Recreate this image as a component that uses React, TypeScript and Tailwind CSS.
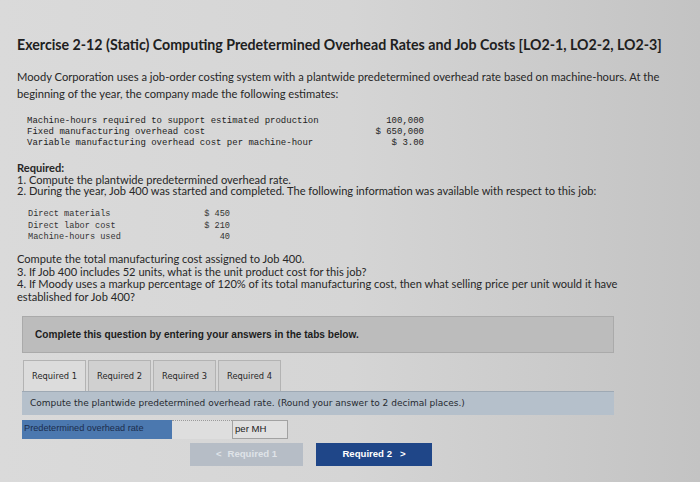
import React from 'react';

const body = { fontFamily: 'Lato, "Open Sans", sans-serif' };
const mono = { fontFamily: '"Liberation Mono", "Courier New", monospace' };
const verdana = { fontFamily: '"DejaVu Sans", Verdana, sans-serif' };
const arial = { fontFamily: '"Liberation Sans", Arial, sans-serif' };

const estimates = [
  ['Machine-hours required to support estimated production', '100,000'],
  ['Fixed manufacturing overhead cost', '$ 650,000'],
  ['Variable manufacturing overhead cost per machine-hour', '$ 3.00'],
];

const jobRows = [
  ['Direct materials', '$ 450'],
  ['Direct labor cost', '$ 210'],
  ['Machine-hours used', '40'],
];

const tabs = ['Required 1', 'Required 2', 'Required 3', 'Required 4'];

export default function App() {
  return (
    <div
      className="h-[482px] w-[700px] overflow-hidden bg-gradient-to-r from-[#dadada] via-[#d5d5d5] to-[#c3c3c3] text-[#272727]"
      style={body}
    >
      <div className="pl-[17px] pt-[37px]">
        <h1 className="whitespace-nowrap text-[14.2px] font-bold leading-[16px] text-[#202020]">
          Exercise 2-12 (Static) Computing Predetermined Overhead Rates and Job Costs [LO2-1, LO2-2, LO2-3]
        </h1>

        <p className="mt-[15px] w-[650px] text-[11.2px] leading-[17px]">
          Moody Corporation uses a job-order costing system with a plantwide predetermined overhead rate based on
          machine-hours. At the beginning of the year, the company made the following estimates:
        </p>

        <div className="ml-[10px] mt-[14px] w-[397px] text-[9px] leading-[11px] text-[#222]" style={mono}>
          {estimates.map(([label, value]) => (
            <div key={label} className="flex justify-between">
              <span>{label}</span>
              <span className="whitespace-pre">{value}</span>
            </div>
          ))}
        </div>

        <div className="mt-[13px] text-[11.1px] leading-[11.5px]">
          <div className="font-bold">Required:</div>
          <div>1. Compute the plantwide predetermined overhead rate.</div>
          <div>
            2. During the year, Job 400 was started and completed. The following information was available with
            respect to this job:
          </div>
        </div>

        <div className="ml-[11px] mt-[12.5px] w-[202px] text-[8.6px] leading-[11.5px] text-[#333]" style={mono}>
          {jobRows.map(([label, value]) => (
            <div key={label} className="flex justify-between">
              <span>{label}</span>
              <span className="whitespace-pre">{value}</span>
            </div>
          ))}
        </div>

        <div className="mt-[9.5px] w-[610px] text-[11.1px] leading-[12.7px]">
          <div>Compute the total manufacturing cost assigned to Job 400.</div>
          <div>3. If Job 400 includes 52 units, what is the unit product cost for this job?</div>
          <div>
            4. If Moody uses a markup percentage of 120% of its total manufacturing cost, then what selling price per
            unit would it have established for Job 400?
          </div>
        </div>
      </div>

      <div className="ml-[22px] w-[592px]">
        <div
          className="mt-[12px] flex h-[37px] items-center border border-[#aaaaaa] bg-[#bcbcbc] pl-[12px] text-[10.1px] font-bold text-[#1c1c1c]"
          style={arial}
        >
          Complete this question by entering your answers in the tabs below.
        </div>

        <div className="mt-[7px] flex h-[31px] gap-[2px] pl-[1px]" style={verdana}>
          {tabs.map((t, i) => (
            <div
              key={t}
              className={`flex w-[63px] items-center justify-center border border-b-0 border-[#b3b3b3] text-[8.3px] ${
                i === 0 ? 'bg-[#dcdcdc]' : 'bg-[#d0d0d0]'
              }`}
            >
              {t}
            </div>
          ))}
        </div>

        <div
          className="flex h-[24px] items-center border-t border-[#9ea9b4] bg-[#b5c0cb] pl-[8px] text-[9px] text-[#262a30]"
          style={verdana}
        >
          Compute the plantwide predetermined overhead rate. (Round your answer to 2 decimal places.)
        </div>

        <div className="mt-[5px] flex h-[19px] text-[9.2px]" style={arial}>
          <div className="flex w-[150px] items-center bg-[#4b78af] pl-[2px] text-[#1b2d4d]">
            Predetermined overhead rate
          </div>
          <div className="w-[60px] border-t border-dotted border-[#9a9a9a] bg-[#dedede]" />
          <div className="flex w-[56px] items-center border border-[#a2a2a2] bg-[#e0e0e0] pl-[2px] text-[9.6px] text-[#222]">
            per MH
          </div>
        </div>

        <div className="mt-[4px] flex h-[23px] gap-[13px] pl-[168px] text-[9.6px] font-bold" style={arial}>
          <div className="flex w-[113px] items-center justify-center gap-[6px] bg-[#b6bdc6] text-[#dfe3e8]">
            <span>&lt;</span>
            <span>Required 1</span>
          </div>
          <div className="flex w-[116px] items-center justify-center gap-[8px] bg-[#1f4688] text-white">
            <span>Required 2</span>
            <span>&gt;</span>
          </div>
        </div>
      </div>
    </div>
  );
}
